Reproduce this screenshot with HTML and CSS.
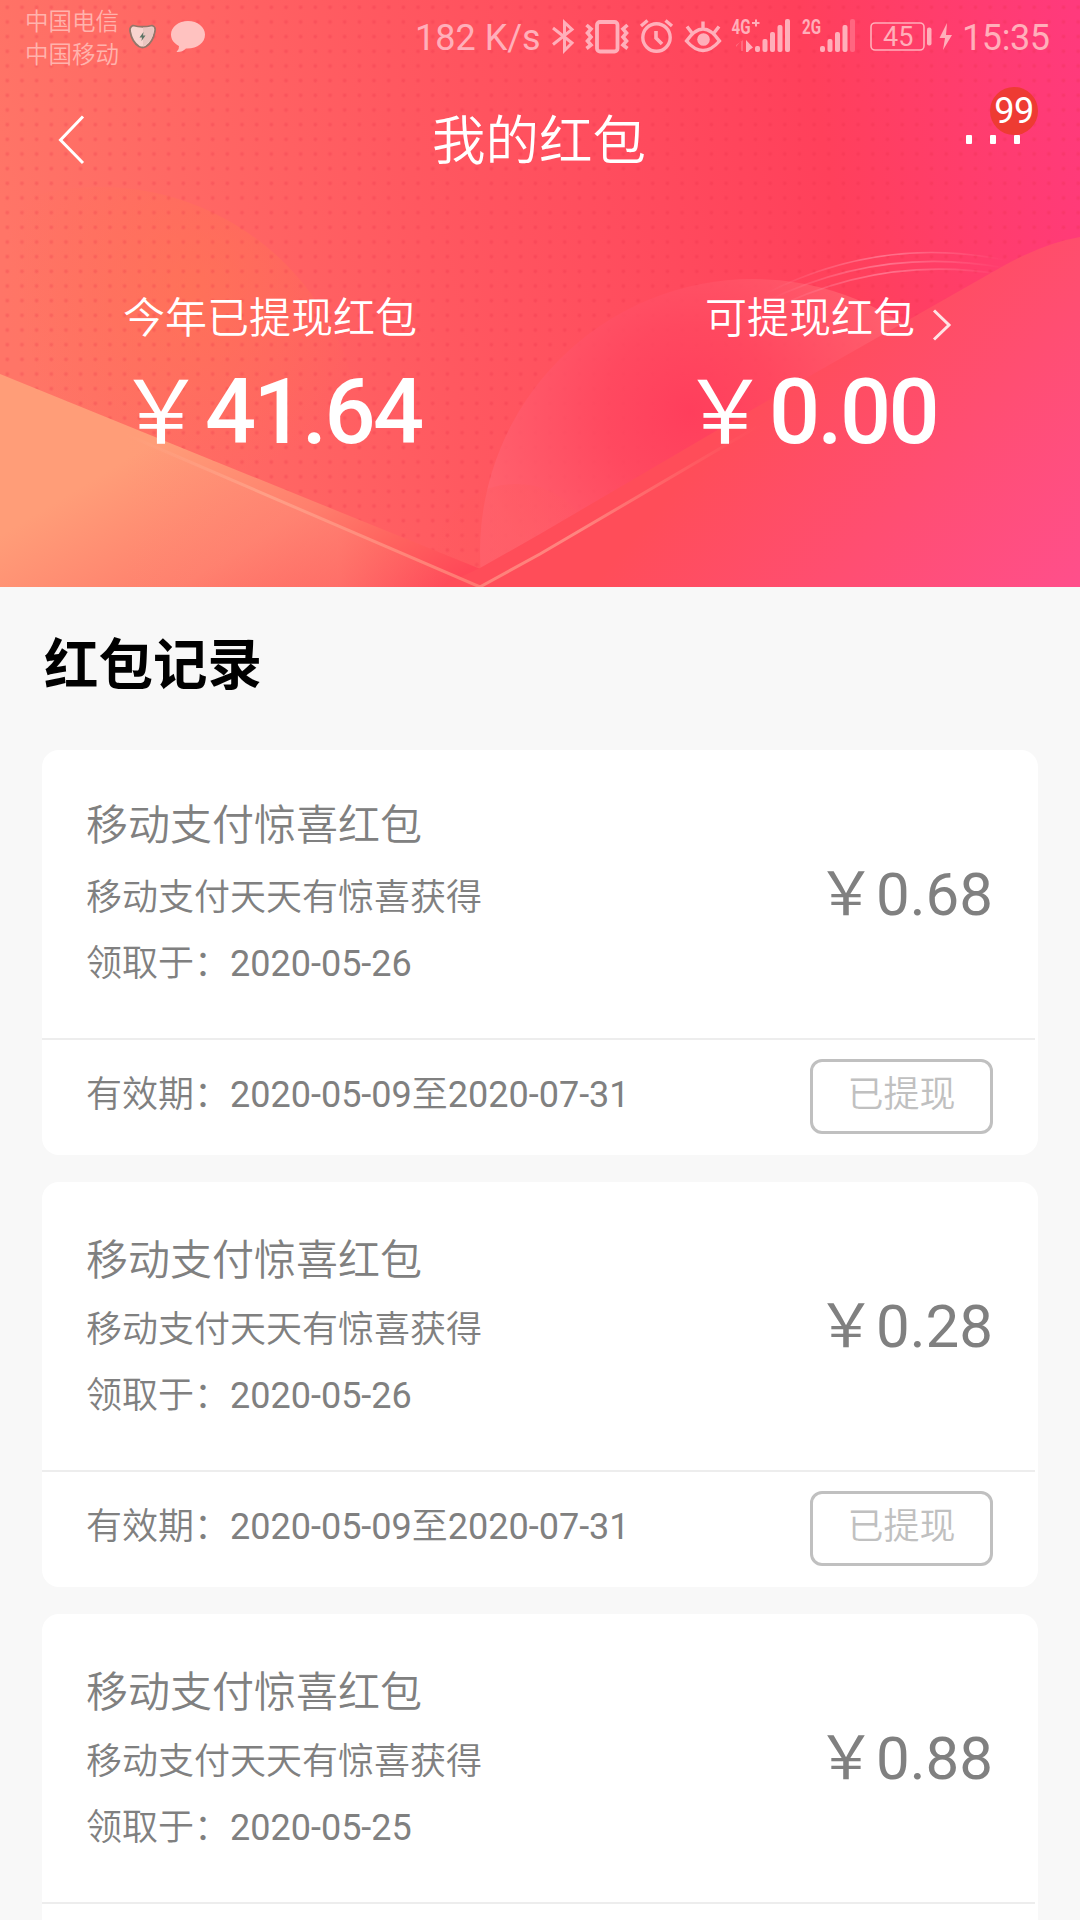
FILE: index.html
```html
<!DOCTYPE html>
<html lang="zh-CN">
<head>
<meta charset="utf-8">
<title>我的红包</title>
<link rel="stylesheet" href="styles.css">
</head>
<body>
<header class="hero">
  <svg class="hero-art" viewBox="0 0 1080 587" preserveAspectRatio="none" aria-hidden="true">
    <defs>
      <linearGradient id="base" gradientUnits="userSpaceOnUse" x1="0" y1="200" x2="1115" y2="-20">
        <stop offset="0" stop-color="#ff7567"/><stop offset=".36" stop-color="#ff5860"/><stop offset=".72" stop-color="#ff405b"/><stop offset="1" stop-color="#ff3982"/>
      </linearGradient>
      <pattern id="dots" width="14.67" height="14.67" patternUnits="userSpaceOnUse">
        <circle cx="7.3" cy="7.3" r="2.4" fill="#f02c48" opacity=".1"/><circle cx="7.3" cy="7.3" r="1.4" fill="#e82840" opacity=".14"/>
      </pattern>
      <radialGradient id="glow" gradientUnits="userSpaceOnUse" cx="190" cy="290" r="190">
        <stop offset="0" stop-color="#ff7850" stop-opacity=".55"/><stop offset="1" stop-color="#ff7850" stop-opacity="0"/>
      </radialGradient>
      <linearGradient id="left" gradientUnits="userSpaceOnUse" x1="75" y1="490" x2="215" y2="723">
        <stop offset="0" stop-color="#ff9d78"/><stop offset=".5" stop-color="#ff7f6d"/><stop offset=".75" stop-color="#ff645f"/><stop offset="1" stop-color="#ff4858"/>
      </linearGradient>
      <linearGradient id="leftSheen" gradientUnits="userSpaceOnUse" x1="125" y1="0" x2="480" y2="0">
        <stop offset="0" stop-color="#ff907c" stop-opacity="0"/><stop offset=".6" stop-color="#ff887a" stop-opacity=".4"/><stop offset="1" stop-color="#ff7070" stop-opacity="0"/>
      </linearGradient>
      <linearGradient id="right" gradientUnits="userSpaceOnUse" x1="750" y1="400" x2="1030" y2="640">
        <stop offset="0" stop-color="#ff4d59"/><stop offset="1" stop-color="#ff4f8b"/>
      </linearGradient>
      <radialGradient id="bubble" gradientUnits="userSpaceOnUse" cx="690" cy="412" r="215">
        <stop offset="0" stop-color="#ff3e5c"/><stop offset=".4" stop-color="#ff4860" stop-opacity=".85"/><stop offset="1" stop-color="#ff6370" stop-opacity=".85"/>
      </radialGradient>
      <linearGradient id="small" x1="0" y1="0" x2="1" y2="0">
        <stop offset="0" stop-color="#ff5858" stop-opacity="0"/><stop offset=".5" stop-color="#ff5a60" stop-opacity=".4"/><stop offset="1" stop-color="#ff5a60" stop-opacity="0"/>
      </linearGradient>
      <linearGradient id="lineL" gradientUnits="userSpaceOnUse" x1="125" y1="437" x2="480" y2="587">
        <stop offset="0" stop-color="#ffad90" stop-opacity="0"/><stop offset=".4" stop-color="#ffa58c" stop-opacity=".8"/><stop offset="1" stop-color="#ff7872"/>
      </linearGradient>
      <linearGradient id="lineR" gradientUnits="userSpaceOnUse" x1="480" y1="587" x2="760" y2="425">
        <stop offset="0" stop-color="#ff8079"/><stop offset=".35" stop-color="#ff8580"/><stop offset="1" stop-color="#ff6868" stop-opacity="0"/>
      </linearGradient>
      <linearGradient id="arc" gradientUnits="userSpaceOnUse" x1="765" y1="0" x2="1005" y2="0">
        <stop offset="0" stop-color="#ff8fa5" stop-opacity="0"/><stop offset=".5" stop-color="#ff8fa5" stop-opacity=".65"/><stop offset="1" stop-color="#ff8fa5" stop-opacity="0"/>
      </linearGradient>
    </defs>
    <rect width="1080" height="587" fill="url(#base)"/>
    <circle cx="100" cy="449" r="262" fill="url(#glow)"/>
    <rect width="1080" height="587" fill="url(#dots)"/>
    <circle cx="753" cy="552" r="273" fill="url(#bubble)"/>
    <circle cx="516" cy="568" r="84" fill="url(#small)"/>
    <g fill="none" stroke="url(#arc)" stroke-width="1.6">
      <path d="M765 294Q880 235 1005 260"/><path d="M765 302Q880 245 1005 268"/><path d="M765 313Q880 253 1005 275"/>
    </g>
    <path d="M0 374L478 568L520 587H0Z" fill="url(#left)"/>
    <path d="M125 434L480 587H125Z" fill="url(#leftSheen)"/>
    <path d="M440 587L480 568L540 534L815 373L1005 265Q1045 243 1080 237V587Z" fill="url(#right)"/>
    <path d="M125 434L480 587" stroke="url(#lineL)" stroke-width="3"/>
    <path d="M478 588L540 554L760 425" fill="none" stroke="url(#lineR)" stroke-width="3"/>
  </svg>

  <div class="status">
    <div class="carriers"><span>中国电信</span><span>中国移动</span></div>
    <svg class="notices" width="90" height="72" viewBox="122 0 90 72">
      <path d="M133 25.5Q143 28 152 25.5Q156 27 155 31Q153 42 146 46.500Q142.500 48.500 139 46.500Q132 42 130 31Q129.500 27 133 25.5Z" fill="#f8d4cf" stroke="#94766a" stroke-width="1.800" stroke-linejoin="round"/>
      <path d="M143 27.500Q149 28 153.500 27Q155 39 143 46.500Z" fill="#e9c5c0"/>
      <path d="M143.500 32L139.500 37.500H142L141.500 41L145.500 35.500H143Z" fill="#5d7466"/>
      <path d="M188 21C178.500 21 171 27 171 34.500C171 39.500 174 43.500 179 46Q179.500 49 176.500 52Q182 52.500 186 48.500C197 49 205 43 205 34.500C205 27 197.500 21 188 21Z" fill="#ffc2c0"/>
    </svg>
    <div class="status-right">
      <span class="speed">182 K/s</span>
      <svg width="403" height="72" viewBox="546 0 403 72" fill="none" stroke="#ffafba" stroke-width="3">
        <path d="M553 28L572 43L564.500 50.500V22.500L572 29.500L553 44.500"/>
        <rect x="597" y="22" width="20.500" height="29.500" rx="3" stroke-width="3.800"/>
        <path d="M586.500 25L591 29L587.500 33L591 37L587.500 41L591 45L586.500 48.500M627.500 25L623 29L626.500 33L623 37L626.500 41L623 45L627.500 48.500" stroke-width="3.600"/>
        <circle cx="656.500" cy="37.500" r="13.700" stroke-width="3.400"/><path d="M656 31V38L662 44" stroke-width="3.600"/><path d="M641 26L647.500 20.500M672 26L665.500 20.500" stroke-width="3.400"/>
        <path d="M686.500 41Q703 17 719.500 41Q703 60 686.500 41ZM687 26.500L692 33M703 21.500V29M719 26.500L714 33" stroke-width="3.400"/>
        <circle cx="703.500" cy="39.500" r="6.300" fill="#ffafba" stroke="none"/>
        <g fill="#ffafba" stroke="none">
          <text class="net" x="731.500" y="33.800" textLength="19" lengthAdjust="spacingAndGlyphs">4G</text><path d="M752 22H755V19.500H757V22H759.500V24H757V26.500H755V24H752Z"/>
          <path d="M736 47L741 41V51H743V40L736 45Z" opacity=".35"/><path d="M746 40L753 47.500L749.500 50L748 52H746Z"/>
          <rect x="755" y="46" width="5" height="6" rx="2"/><rect x="762.500" y="39" width="5" height="13" rx="2"/><rect x="770" y="32" width="5" height="20" rx="2"/><rect x="777.500" y="25" width="5" height="27" rx="2"/><rect x="785" y="19" width="5" height="33" rx="2"/>
          <text class="net" x="802" y="33.800" textLength="19" lengthAdjust="spacingAndGlyphs">2G</text>
          <rect x="820" y="46" width="5" height="6" rx="2"/><rect x="827.500" y="39" width="5" height="13" rx="2"/><rect x="835" y="32" width="5" height="20" rx="2"/><rect x="842.500" y="25" width="5" height="27" rx="2"/><rect x="850" y="19" width="5" height="33" rx="2" opacity=".35"/>
          <text class="battery" x="883" y="46">45</text>
          <rect x="927" y="27.500" width="4.500" height="18" rx="2"/>
          <path d="M947 23L939.500 38H945L943 50L952 35H946Z"/>
        </g>
        <rect x="871" y="23" width="53" height="27" rx="4" stroke-width="1.600"/>
      </svg>
      <svg class="bolt" width="13" height="72" viewBox="949 0 13 72"><path d="M947 23L939.500 38H945L943 50L952 35H946Z" fill="#ffafba"/></svg>
      <span class="clock">15:35</span>
    </div>
  </div>

  <nav class="nav">
    <svg class="back" width="30" height="54" viewBox="57 113 30 54"><path d="M83 116.500L60.500 140L83 163" fill="none" stroke="#fff" stroke-width="3"/></svg>
    <h1>我的红包</h1>
    <div class="more"><i></i><i></i><i></i><span class="badge">99</span></div>
  </nav>

  <section class="totals">
    <div class="total total-year"><p>今年已提现红包</p><strong><span class="yen">￥</span>41.64</strong></div>
    <div class="total total-open"><p>可提现红包<svg width="20" height="34" viewBox="0 0 20 34"><path d="M2 2.500L17 17L2 31.500" fill="none" stroke="#ffe3e5" stroke-width="3"/></svg></p><strong><span class="yen">￥</span>0.00</strong></div>
  </section>
</header>

<main class="records">
  <h2>红包记录</h2>
  <article class="card card-first">
    <div class="card-main"><div class="info"><h3>移动支付惊喜红包</h3><p class="source">移动支付天天有惊喜获得</p><p><span class="label">领取于：</span>2020-05-26</p></div><div class="price">￥0.68</div></div>
    <div class="card-foot"><div><span class="label">有效期：</span>2020-05-09<span class="label">至</span>2020-07-31</div><button>已提现</button></div>
  </article>
  <article class="card">
    <div class="card-main"><div class="info"><h3>移动支付惊喜红包</h3><p class="source">移动支付天天有惊喜获得</p><p><span class="label">领取于：</span>2020-05-26</p></div><div class="price">￥0.28</div></div>
    <div class="card-foot"><div><span class="label">有效期：</span>2020-05-09<span class="label">至</span>2020-07-31</div><button>已提现</button></div>
  </article>
  <article class="card card-cut">
    <div class="card-main"><div class="info"><h3>移动支付惊喜红包</h3><p class="source">移动支付天天有惊喜获得</p><p><span class="label">领取于：</span>2020-05-25</p></div><div class="price">￥0.88</div></div>
    <div class="card-foot"></div>
  </article>
</main>
</body>
</html>
```
FILE: styles.css
```css
* { box-sizing: border-box; margin: 0; padding: 0; }
body {
  width: 1080px; height: 1920px; overflow: hidden;
  background: #f8f8f8; color: #808080;
  font-family: Roboto, "Noto Sans CJK SC", sans-serif;
}
svg { display: block; flex: none; }
.hero { position: relative; height: 587px; color: #fff; }
.hero-art { position: absolute; inset: 0; width: 1080px; height: 587px; z-index: -1; }

.status { height: 72px; display: flex; color: #ffafba; padding-left: 25px; }
.carriers { width: 97px; display: flex; flex-direction: column; padding-top: 6px; font-size: 23.500px; line-height: 33px; color: #ffb3ad; font-weight: 350; }
.status-right { margin-left: auto; display: flex; align-items: center; padding-right: 30px; font-size: 36px; }
.speed { width: 131px; line-height: 72px; padding-top: 3px; white-space: nowrap; }
.clock { width: 88px; line-height: 72px; padding-top: 3px; white-space: nowrap; letter-spacing: -.4px; }
.net { font: 700 20px Roboto, sans-serif; }
.battery { font: 400 27px Roboto, sans-serif; }

.nav { height: 132px; display: grid; grid-template-columns: 200px 1fr 200px; align-items: center; padding-top: 3px; }
.back { margin-left: 57px; }
.nav h1 { text-align: center; font-size: 53.500px; font-weight: 350; line-height: 80px; padding-top: 5px; margin-left: -2px; }
.more { position: relative; display: flex; gap: 18px; padding-left: 86px; }
.more i { width: 6px; height: 9px; background: #fff; border-radius: 1px; }
.badge { position: absolute; left: 110px; top: -48px; width: 48px; height: 48px; border-radius: 50%; background: #ee3b33; font-size: 36px; letter-spacing: -.5px; line-height: 48px; text-align: center; }

.totals { display: flex; padding-top: 82px; }
.total p { display: flex; align-items: flex-start; font-size: 42px; font-weight: 350; line-height: 66px; margin-left: -1px; }
.total p svg { margin: 22px 0 0 17px; }
.total strong { display: flex; align-items: baseline; font-size: 90px; font-weight: 500; line-height: 120px; letter-spacing: -2.600px; margin-top: -7px; }
.yen { font-size: 88px; font-weight: 400; letter-spacing: 0; font-family: "Noto Sans CJK SC", sans-serif; }
.total-year { width: 582px; padding-left: 124px; }
.total-year strong { margin-left: -7px; }
.total-open { padding-left: 124px; }
.total-open strong { margin-left: -25px; }

.records { height: 1333px; overflow: hidden; padding: 38px 42px 0; }
.records h2 { font-size: 54.500px; line-height: 80px; color: #000; font-weight: 700; padding-left: 2px; margin-bottom: 45px; }
.card { height: 405px; margin-bottom: 27px; background: #fff; border-radius: 17px; }
.card-main { height: 288px; display: flex; justify-content: space-between; padding: 49px 45px 0 44px; }
.info { display: flex; flex-direction: column; }
.info h3 { font-size: 42px; font-weight: 350; line-height: 60px; margin-bottom: 6px; }
.card-first .card-main { padding-top: 46px; }
.card-first .info h3 { margin-bottom: 9px; }
.info p { font-size: 36px; line-height: 66px; height: 66px; }
.info .source, .label { font-weight: 350; }
.card-first .price { padding-top: 59px; }
.price { font-size: 60px; line-height: 80px; padding-top: 56px; }
.card-foot { height: 117px; margin-right: 3px; border-top: 2px solid #ededed; display: flex; justify-content: space-between; padding: 19px 42px 0 44px; font-size: 36px; line-height: 72px; }
.card-foot button { width: 183px; height: 75px; border: 3px solid #c0c0c0; border-radius: 12px; background: #fff; color: #c0c0c0; font: 350 36px/60px Roboto, "Noto Sans CJK SC", sans-serif; padding-bottom: 3px; }
.card-cut { height: 306px; margin-bottom: 0; border-radius: 17px 17px 0 0; }
.card-cut .card-foot { height: 18px; padding: 0; }
```
